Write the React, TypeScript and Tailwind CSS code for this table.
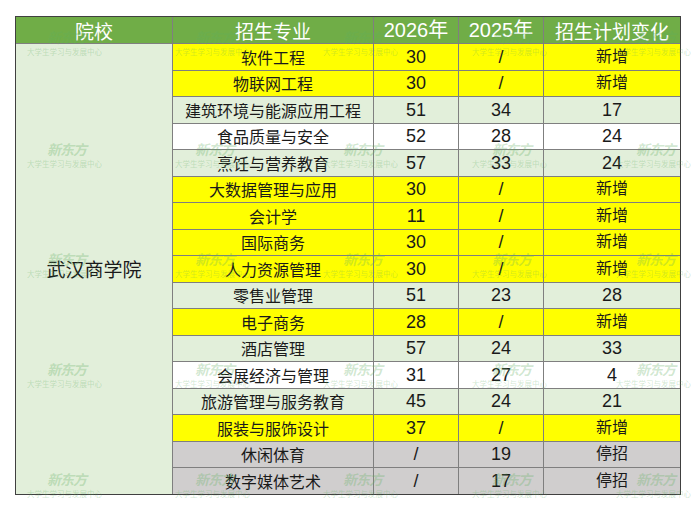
import React from "react";

type Row = { name: string; a: string; b: string; c: string; bg: string };

const Y = "bg-[#ffff00]";
const G = "bg-[#e2efda]";
const W = "bg-white";
const R = "bg-[#d0cece]";

const rows: Row[] = [
  { name: "软件工程", a: "30", b: "/", c: "新增", bg: Y },
  { name: "物联网工程", a: "30", b: "/", c: "新增", bg: Y },
  { name: "建筑环境与能源应用工程", a: "51", b: "34", c: "17", bg: G },
  { name: "食品质量与安全", a: "52", b: "28", c: "24", bg: W },
  { name: "烹饪与营养教育", a: "57", b: "33", c: "24", bg: G },
  { name: "大数据管理与应用", a: "30", b: "/", c: "新增", bg: Y },
  { name: "会计学", a: "11", b: "/", c: "新增", bg: Y },
  { name: "国际商务", a: "30", b: "/", c: "新增", bg: Y },
  { name: "人力资源管理", a: "30", b: "/", c: "新增", bg: Y },
  { name: "零售业管理", a: "51", b: "23", c: "28", bg: G },
  { name: "电子商务", a: "28", b: "/", c: "新增", bg: Y },
  { name: "酒店管理", a: "57", b: "24", c: "33", bg: G },
  { name: "会展经济与管理", a: "31", b: "27", c: "4", bg: W },
  { name: "旅游管理与服务教育", a: "45", b: "24", c: "21", bg: G },
  { name: "服装与服饰设计", a: "37", b: "/", c: "新增", bg: Y },
  { name: "休闲体育", a: "/", b: "19", c: "停招", bg: R },
  { name: "数字媒体艺术", a: "/", b: "17", c: "停招", bg: R },
];

const cjk = "font-['Noto_Sans_CJK_SC',sans-serif]";
const num = "font-['Liberation_Sans','Noto_Sans_CJK_SC',sans-serif]";

const wmX = [47, 195, 343, 492, 636];
const wmY = [30, 142, 252, 362, 472];

export default function App() {
  return (
    <div className="w-[691px] h-[508px] bg-white relative overflow-hidden">
      <div className="pt-[16px] pl-[15px]">
        <div className="grid grid-cols-[156px_200px_84px_84px_136px] grid-rows-[26px_repeat(17,25.5px)] gap-px bg-[#7f7f7f] border border-[#404040] w-fit text-[#1a1a1a] leading-none">
          <div className={`bg-[#70ad47] text-white text-[19px] flex items-center justify-center ${cjk}`}>院校</div>
          <div className={`bg-[#70ad47] text-white text-[19px] flex items-center justify-center ${cjk}`}>招生专业</div>
          <div className={`bg-[#70ad47] text-white text-[20px] flex items-center justify-center ${num}`}>2026年</div>
          <div className={`bg-[#70ad47] text-white text-[20px] flex items-center justify-center ${num}`}>2025年</div>
          <div className={`bg-[#70ad47] text-white text-[19px] flex items-center justify-center ${cjk}`}>招生计划变化</div>

          <div className={`row-[span_17_/_span_17] bg-[#e2efda] text-[19px] flex items-center justify-center ${cjk}`}>
            武汉商学院
          </div>
          {rows.map((r, i) => (
            <React.Fragment key={i}>
              <div className={`${r.bg} text-[16px] flex items-center justify-center ${cjk}`}>{r.name}</div>
              <div className={`${r.bg} text-[18px] flex items-center justify-center ${num}`}>{r.a}</div>
              <div className={`${r.bg} text-[18px] flex items-center justify-center ${num}`}>{r.b}</div>
              <div className={`${r.bg} ${/\d/.test(r.c) ? "text-[18px]" : "text-[16px]"} flex items-center justify-center ${num}`}>{r.c}</div>
            </React.Fragment>
          ))}
        </div>
      </div>

      <div className="absolute inset-0 pointer-events-none">
        {wmY.map((y) =>
          wmX.map((x) => (
            <div key={`${x}-${y}`} className="absolute" style={{ left: x, top: y }}>
              <div className={`italic font-bold text-[14px] leading-none text-[#5fae5f]/30 tracking-[-1px] ${cjk}`}>新东方</div>
              <div className={`absolute left-[-20px] top-[18px] whitespace-nowrap text-[7.5px] leading-none text-[#5fae5f]/30 ${cjk}`}>
                大学生学习与发展中心
              </div>
            </div>
          ))
        )}
      </div>
    </div>
  );
}
